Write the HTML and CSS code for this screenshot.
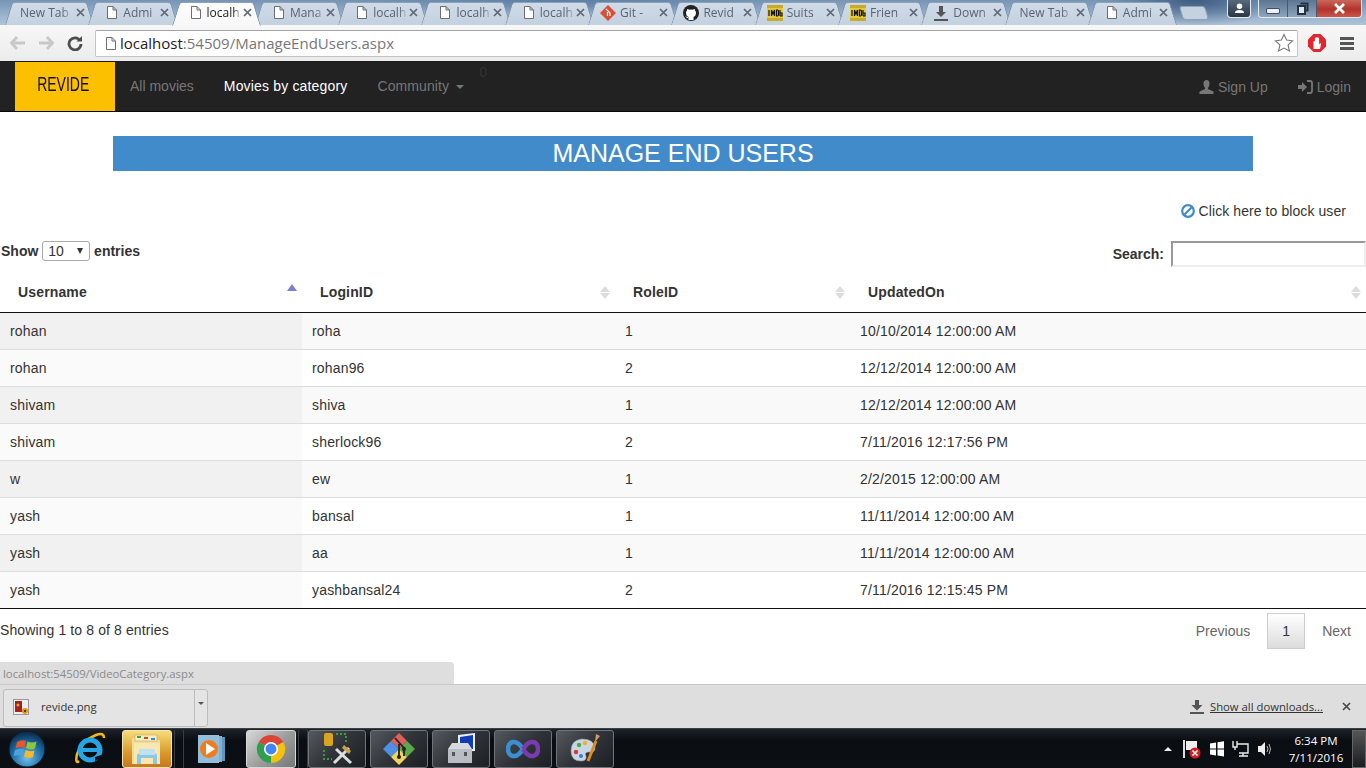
FILE: index.html
```html
<!DOCTYPE html>
<html lang="en">
<head>
  <meta charset="UTF-8">
  <title>Manage End Users</title>
  <link rel="stylesheet" href="styles.css">
</head>
<body>

  <!-- shared icons -->
  <svg class="defs" width="0" height="0">
    <defs>
      <symbol id="i-page" viewBox="0 0 10 13"><path d="M.5.5h5.500l3.500 3.500v8.500h-9z M6 .5v3.500h3.500" fill="#fff" stroke="#6b6f74"/></symbol>
      <symbol id="i-x" viewBox="0 0 9 9"><path d="M1 1l7 7M8 1l-7 7" stroke="#5f6873" stroke-width="1.700" fill="none"/></symbol>
      <symbol id="i-imdb" viewBox="0 0 16 16"><rect width="16" height="16" fill="#c9ab26"/><rect y="3" width="16" height="10" fill="#e6c93f"/><path d="M2 5v6M4.500 11V5l1.500 4 1.500-4v6M9.500 5v6h1q1 0 1-1.500v-3q0-1.500-1-1.500zM13 5v6M13 8h2v3h-2" stroke="#111" stroke-width="1.200" fill="none"/></symbol>
    </defs>
  </svg>

  <!-- browser tabs -->
  <div class="tabstrip">
    <div class="tab tab-plain"><span class="tab-title">New Tab</span><svg class="tab-close"><use href="#i-x"/></svg></div>
    <div class="tab"><svg class="tab-icon"><use href="#i-page"/></svg><span class="tab-title">Admi</span><svg class="tab-close"><use href="#i-x"/></svg></div>
    <div class="tab tab-active"><svg class="tab-icon"><use href="#i-page"/></svg><span class="tab-title">localh</span><svg class="tab-close"><use href="#i-x"/></svg></div>
    <div class="tab"><svg class="tab-icon"><use href="#i-page"/></svg><span class="tab-title">Mana</span><svg class="tab-close"><use href="#i-x"/></svg></div>
    <div class="tab"><svg class="tab-icon"><use href="#i-page"/></svg><span class="tab-title">localh</span><svg class="tab-close"><use href="#i-x"/></svg></div>
    <div class="tab"><svg class="tab-icon"><use href="#i-page"/></svg><span class="tab-title">localh</span><svg class="tab-close"><use href="#i-x"/></svg></div>
    <div class="tab"><svg class="tab-icon"><use href="#i-page"/></svg><span class="tab-title">localh</span><svg class="tab-close"><use href="#i-x"/></svg></div>
    <div class="tab tab-wide-icon"><svg class="tab-icon" viewBox="0 0 16 16"><path d="M8 0l8 8-8 8-8-8z" fill="#dd4c35"/><path d="M6 4l4 4v3M7.500 7v4" stroke="#fff" stroke-width="1.200" fill="none"/></svg><span class="tab-title">Git -</span><svg class="tab-close"><use href="#i-x"/></svg></div>
    <div class="tab tab-wide-icon"><svg class="tab-icon" viewBox="0 0 16 16"><circle cx="8" cy="8" r="8" fill="#222"/><path d="M5.500 15v-3Q3 11 3 7.500q0-1 1-2 0-1 .2-1.500 1 0 2 .8 1.800-.4 3.600 0 1-.8 2-.8.200.5.200 1.500 1 1 1 2 0 3.500-2.500 4.500v3z" fill="#fff"/><path d="M5 12.500q-1.500.5-2-1" stroke="#fff" fill="none"/></svg><span class="tab-title">Revid</span><svg class="tab-close"><use href="#i-x"/></svg></div>
    <div class="tab tab-wide-icon"><svg class="tab-icon"><use href="#i-imdb"/></svg><span class="tab-title">Suits</span><svg class="tab-close"><use href="#i-x"/></svg></div>
    <div class="tab tab-wide-icon"><svg class="tab-icon"><use href="#i-imdb"/></svg><span class="tab-title">Frien</span><svg class="tab-close"><use href="#i-x"/></svg></div>
    <div class="tab tab-wide-icon"><svg class="tab-icon" viewBox="0 0 16 16"><path d="M6 1h4v6h3l-5 5-5-5h3zM1 14h14v2H1z" fill="#555"/></svg><span class="tab-title">Down</span><svg class="tab-close"><use href="#i-x"/></svg></div>
    <div class="tab tab-plain"><span class="tab-title">New Tab</span><svg class="tab-close"><use href="#i-x"/></svg></div>
    <div class="tab"><svg class="tab-icon"><use href="#i-page"/></svg><span class="tab-title">Admi</span><svg class="tab-close"><use href="#i-x"/></svg></div>
    <div class="tab-new"></div>

    <div class="win-controls">
      <div class="win-user">
        <svg width="11" height="11" viewBox="0 0 12 12"><circle cx="6" cy="3.500" r="3" fill="#fff"/><path d="M1 11q0-3.500 5-3.500t5 3.500z" fill="#fff"/></svg>
      </div>
      <div class="win-group">
        <div class="win-btn"><span class="win-min"></span></div>
        <div class="win-btn">
          <svg width="13" height="13" viewBox="0 0 13 13"><path d="M4.500 1.500h7v7h-2" fill="none" stroke="#26323f" stroke-width="2"/><rect x="2" y="4" width="7" height="8" fill="#dfe7ef" stroke="#26323f" stroke-width="2"/></svg>
        </div>
        <div class="win-btn win-close"><svg width="15" height="11" viewBox="0 0 15 11"><path d="M3 1l9 9M12 1l-9 9" stroke="#fff" stroke-width="2.800"/></svg></div>
      </div>
    </div>
  </div>

  <!-- browser toolbar -->
  <div class="toolbar">
    <svg class="tool-arrow" viewBox="0 0 16 14"><path d="M7 1L1.500 7 7 13M2 7h13" fill="none" stroke="#c8c8c8" stroke-width="2.800"/></svg>
    <svg class="tool-arrow" viewBox="0 0 16 14"><path d="M9 1l5.500 6L9 13M14 7H1" fill="none" stroke="#c8c8c8" stroke-width="2.800"/></svg>
    <svg class="tool-reload" viewBox="0 0 16 16"><path d="M13 5.500A6 6 0 1 0 14 9" fill="none" stroke="#4d4d4d" stroke-width="2.800"/><path d="M9.500 6.500H15V1z" fill="#4d4d4d"/></svg>
    <div class="omnibox">
      <svg class="omni-page"><use href="#i-page"/></svg>
      <span class="omni-url"><b>localhost</b>:54509/ManageEndUsers.aspx</span>
      <svg class="omni-star" viewBox="0 0 20 20"><path d="M10 1.500l2.600 5.600 6 .7-4.500 4.100 1.300 6L10 15l-5.400 2.900 1.300-6L1.400 7.800l6-.7z" fill="#fff" stroke="#777" stroke-width="1.100"/></svg>
    </div>
    <svg class="tool-opera" viewBox="0 0 18 18"><path d="M5.500 0h7L18 5.500v7L12.500 18h-7L0 12.500v-7z" fill="#e3262e"/><path d="M5.500 15V8q0-1 .7-1t.7 1V4.500q0-.9.7-.9t.7.9V4q0-.9.700-.9t.7.9v.5q0-.9.700-.9t.7.9v6l.8-1q.9-.6 1.200.2L12 15z" fill="#fff"/></svg>
    <div class="tool-menu"><span></span><span></span><span></span></div>
  </div>

  <!-- page navbar -->
  <nav class="navbar">
    <a class="brand"><span class="brand-text">REVIDE</span></a>
    <a class="nav-link">All movies</a>
    <a class="nav-link nav-current">Movies by category</a>
    <a class="nav-link nav-community">Community <span class="caret"></span></a>
    <span class="nav-count">0</span>
    <div class="nav-right">
      <a class="nav-link nav-icon-link">
        <svg class="nav-icon" viewBox="0 0 14 14"><path d="M7 0q3 0 3 3.500T8.500 8v1L14 11.500V14H0v-2.500L5.500 9V8Q4 7 4 3.500T7 0z" fill="#777"/></svg>Sign Up
      </a>
      <a class="nav-link nav-icon-link">
        <svg class="nav-icon" viewBox="0 0 15 14"><path d="M0 5h4V2l5 5-5 5V9H0z" fill="#777"/><path d="M9 1h3q2 0 2 2v8q0 2-2 2H9" fill="none" stroke="#777" stroke-width="1.800"/></svg>Login
      </a>
    </div>
  </nav>

  <main class="content">
    <h1 class="banner">MANAGE END USERS</h1>

    <div class="block-row">
      <a class="block-link">
        <svg class="block-icon" viewBox="0 0 14 14"><circle cx="7" cy="7" r="5.800" fill="none" stroke="#428bca" stroke-width="2.200"/><path d="M3 11l8-8" stroke="#428bca" stroke-width="2.200"/></svg>
        Click here to block user
      </a>
    </div>

    <div class="dt-controls">
      <label class="dt-length">Show <span class="fake-select">10<i></i></span> entries</label>
      <label class="dt-search">Search: <input class="dt-input" type="text"></label>
    </div>

    <table class="users">
      <thead>
        <tr>
          <th class="col-user sorted">Username</th>
          <th class="col-login">LoginID</th>
          <th class="col-role">RoleID</th>
          <th class="col-date">UpdatedOn</th>
        </tr>
      </thead>
      <tbody>
        <tr><td>rohan</td><td>roha</td><td>1</td><td>10/10/2014 12:00:00 AM</td></tr>
        <tr><td>rohan</td><td>rohan96</td><td>2</td><td>12/12/2014 12:00:00 AM</td></tr>
        <tr><td>shivam</td><td>shiva</td><td>1</td><td>12/12/2014 12:00:00 AM</td></tr>
        <tr><td>shivam</td><td>sherlock96</td><td>2</td><td>7/11/2016 12:17:56 PM</td></tr>
        <tr><td>w</td><td>ew</td><td>1</td><td>2/2/2015 12:00:00 AM</td></tr>
        <tr><td>yash</td><td>bansal</td><td>1</td><td>11/11/2014 12:00:00 AM</td></tr>
        <tr><td>yash</td><td>aa</td><td>1</td><td>11/11/2014 12:00:00 AM</td></tr>
        <tr><td>yash</td><td>yashbansal24</td><td>2</td><td>7/11/2016 12:15:45 PM</td></tr>
      </tbody>
    </table>

    <div class="dt-footer">
      <div class="dt-info">Showing 1 to 8 of 8 entries</div>
      <div class="pager">
        <a class="page-link">Previous</a>
        <a class="page-num">1</a>
        <a class="page-link page-next">Next</a>
      </div>
    </div>

    <div class="status-bubble">localhost:54509/VideoCategory.aspx</div>
  </main>

  <!-- downloads shelf -->
  <div class="shelf">
    <div class="shelf-item">
      <div class="shelf-file">
        <svg class="shelf-thumb" viewBox="0 0 16 16"><rect x=".5" y=".5" width="15" height="15" fill="#eee" stroke="#999"/><rect x="2" y="2" width="7" height="11" fill="#a3231c"/><circle cx="5" cy="6" r="1.500" fill="#e9a13a"/><circle cx="12" cy="12" r="3" fill="#e0990f"/><circle cx="12" cy="12" r="1" fill="#222"/></svg>
        <span>revide.png</span>
      </div>
      <div class="shelf-drop"><i></i></div>
    </div>
    <div class="shelf-right">
      <svg class="shelf-dl" viewBox="0 0 14 14"><path d="M5 0h4v5h3.500L7 10.500 1.500 5H5zM0 12h14v2H0z" fill="#555"/></svg>
      <a class="shelf-all">Show all downloads...</a>
      <svg class="shelf-x" viewBox="0 0 9 9"><path d="M1 1l7 7M8 1l-7 7" stroke="#444" stroke-width="1.600"/></svg>
    </div>
  </div>

  <!-- windows taskbar -->
  <footer class="taskbar">
    <div class="orb-slot">
      <svg width="38" height="38" viewBox="0 0 38 38">
        <defs>
          <radialGradient id="orb" cx="50%" cy="75%" r="70%"><stop offset="0" stop-color="#6fc0e8"/><stop offset=".6" stop-color="#1c6aa5"/><stop offset="1" stop-color="#0d2d4a"/></radialGradient>
        </defs>
        <circle cx="19" cy="19" r="18" fill="url(#orb)" stroke="#0a1a2a"/>
        <path d="M9 12q5-3 9-1l-1.500 7q-4-2-9 .5z" fill="#e8562a"/>
        <path d="M19.500 11.500q4 2 9 0L27 18.500q-4 2-9-.5z" fill="#8cc63f"/>
        <path d="M7 20q5-2 9-.5L15 26q-4-2-9.500.5z" fill="#4aa3df"/>
        <path d="M17.500 20q4 2 9 .5L25 27q-4 2-9-.5z" fill="#f5b92e"/>
      </svg>
    </div>
    <div class="pin-slot pin-ie">
      <svg width="32" height="34" viewBox="0 0 32 34">
        <path d="M5 29Q1 33 3 22 7 9 22 3q8-3 8 3" fill="none" stroke="#f0b81e" stroke-width="2.500"/>
        <circle cx="16" cy="18" r="10" fill="none" stroke="#25a5e4" stroke-width="5"/>
        <path d="M8 18h17" stroke="#25a5e4" stroke-width="4"/>
        <path d="M21 25l6-2v3l-6 3z" fill="#0d1116"/>
      </svg>
    </div>
    <div class="task-btn task-hot">
      <svg width="32" height="32" viewBox="0 0 32 32">
        <path d="M1 5h12l2 2h14v24H1z" fill="#f1dc9a"/>
        <rect x="4" y="2" width="22" height="6" fill="#fbeec0" stroke="#c4a964" stroke-width=".6"/>
        <rect x="6" y="3" width="4" height="2" fill="#2ea84a"/><rect x="13" y="4" width="4" height="2" fill="#d9482b"/><rect x="20" y="5" width="4" height="2" fill="#3a8bd8"/>
        <path d="M3 10h26v21H3z" fill="#f7e7b0"/>
        <path d="M6 31v-8q0-3 3-3h14q3 0 3 3v8h-4v-6H10v6z" fill="#8fc6e6"/>
        <rect x="8" y="16" width="16" height="6" rx="1" fill="#bfe1f2"/>
      </svg>
    </div>
    <div class="task-sep"></div>
    <div class="pin-slot pin-wmp">
      <svg width="28" height="30" viewBox="0 0 28 30">
        <rect x="6" y="3" width="21" height="24" fill="#5f95bd"/><rect x="3" y="2" width="21" height="26" fill="#7fb1d4"/><rect x="0" y="1" width="21" height="28" fill="#93bedb"/>
        <circle cx="11" cy="15" r="9" fill="#f07d1d"/><path d="M8 9l9 6-9 6z" fill="#fff"/>
      </svg>
    </div>
    <div class="task-btn task-open">
      <svg width="30" height="30" viewBox="0 0 32 32">
        <path d="M16 16L3 8.500A15 15 0 0 1 29 8.500z" fill="#db4437"/>
        <path d="M16 16L29 8.500A15 15 0 0 1 16 31z" fill="#f4c20d"/>
        <path d="M16 16V31A15 15 0 0 1 3 8.500z" fill="#2e9e4f"/>
        <circle cx="16" cy="16" r="7.500" fill="#fff"/><circle cx="16" cy="16" r="5.800" fill="#4285f4"/>
      </svg>
    </div>
    <div class="task-sep task-sep-last"></div>
    <div class="task-btn task-app">
      <svg width="34" height="34" viewBox="0 0 34 34">
        <rect x="4" y="1" width="9" height="13" rx="2" fill="#d9a520"/>
        <path d="M16 2h10v10M4 18v9h8" fill="none" stroke="#3aa13a" stroke-width="1.800" stroke-dasharray="2 2"/>
        <path d="M14 31L29 16M16 17l15 14" stroke="#ddd" stroke-width="3"/>
        <path d="M24 13l7 6-2 3-7-6z" fill="#c9a24a"/>
      </svg>
    </div>
    <div class="task-btn task-app">
      <svg width="34" height="34" viewBox="0 0 34 34">
        <path d="M17 1l8 8-8 8-8-8z" fill="#e0605c"/><path d="M1 17l8-8 8 8-8 8z" fill="#4f8fe6"/><path d="M33 17l-8-8-8 8 8 8z" fill="#5ca84b"/><path d="M17 33l-8-8 8-8 8 8z" fill="#eed35f"/>
        <path d="M13 6l9 10v8M17 12v12" stroke="#222" stroke-width="1.800" fill="none"/><circle cx="22" cy="17" r="2" fill="#222"/><circle cx="17" cy="25" r="2" fill="#222"/>
      </svg>
    </div>
    <div class="task-btn task-app">
      <svg width="34" height="34" viewBox="0 0 34 34">
        <path d="M14 3l17-2v18l-17 1z" fill="#e8eef7"/><path d="M16 5l13-2v14l-13 1z" fill="#123bb5"/>
        <rect x="4" y="17" width="24" height="14" fill="#b9bec4"/><path d="M4 17l4-6h16l4 6z" fill="#d6dade"/>
        <rect x="8" y="20" width="3" height="4" fill="#555"/><rect x="20" y="20" width="3" height="4" fill="#555"/>
      </svg>
    </div>
    <div class="task-btn task-app">
      <svg width="34" height="22" viewBox="0 0 34 22">
        <path d="M17 11q-5-8-10-7T2 11t5 7 10-7" fill="none" stroke="#3b8fd0" stroke-width="4.500"/>
        <path d="M17 11q5-8 10-7t5 7-5 7-10-7" fill="none" stroke="#7a3bb0" stroke-width="4.500"/>
      </svg>
    </div>
    <div class="task-btn task-app">
      <svg width="34" height="34" viewBox="0 0 34 34">
        <path d="M3 19Q3 8 14 7q12 0 13 9 0 5-6 4-5 0-3 4 1 5-5 5-10 0-10-10z" fill="#c9d6e4" stroke="#8fa0b0" stroke-width=".6"/>
        <circle cx="8" cy="20" r="2.200" fill="#d9382b"/><circle cx="11" cy="13" r="2.200" fill="#53a83c"/><circle cx="17" cy="11" r="2.200" fill="#e9b52a"/><circle cx="13" cy="24" r="2" fill="#3a7bd8"/>
        <path d="M20 29L28 9" stroke="#e08a22" stroke-width="3"/><path d="M27 10l1-8 4 2z" fill="#c9a06a"/>
      </svg>
    </div>

    <div class="tray">
      <span class="tray-up"></span>
      <svg class="tray-icon" width="20" height="20" viewBox="0 0 20 20"><path d="M2 1v18" stroke="#ddd" stroke-width="2"/><path d="M4 2h11v9H4z" fill="#eee"/><circle cx="13" cy="14" r="5.500" fill="#d41f26"/><path d="M10.500 11.500l5 5M15.500 11.500l-5 5" stroke="#fff" stroke-width="1.600"/></svg>
      <svg class="tray-icon" width="16" height="16" viewBox="0 0 16 16"><path d="M1 2.500l6-1v6H1zM8.500 1.300l6.500-1v7.200H8.500zM1 8.500h6v6l-6-1zM8.500 8.500H15v7l-6.500-1z" fill="#fff"/></svg>
      <svg class="tray-icon" width="18" height="18" viewBox="0 0 18 18"><path d="M1 1v6h4V1M3 7v3" fill="none" stroke="#eee" stroke-width="1.400"/><path d="M5 4h11v9H7" fill="none" stroke="#eee" stroke-width="1.400"/><path d="M11 13v3M7 16h9" stroke="#eee" stroke-width="1.400"/></svg>
      <svg class="tray-icon" width="16" height="16" viewBox="0 0 16 16"><path d="M1 5h3l4-4v14l-4-4H1z" fill="#eee"/><path d="M10 5q2 3 0 6M12 3q3 5 0 10" fill="none" stroke="#bbb"/></svg>
      <div class="clock"><div>6:34 PM</div><div>7/11/2016</div></div>
      <div class="show-desktop"></div>
    </div>
  </footer>

</body>
</html>
```

FILE: styles.css
```css
* {
  margin: 0;
  padding: 0;
  box-sizing: border-box;
}

html, body {
  width: 1366px;
  height: 768px;
  overflow: hidden;
}

body {
  display: flex;
  flex-direction: column;
  font-family: "Liberation Sans", Arial, sans-serif;
  font-size: 14px;
  line-height: 20px;
  color: #333;
  background: #fff;
}

.defs {
  position: absolute;
}

/* tabs */
.tabstrip {
  position: relative;
  z-index: 1;
  height: 25px;
  display: flex;
  padding-left: 8px;
  padding-top: 2px;
  background:
    radial-gradient(90px 26px at 1195px 0, #3d5c82, transparent),
    radial-gradient(220px 14px at 560px 0, #5d7ea4, transparent),
    linear-gradient(#7694b5, #9fb7cf 70%, #aec3d8);
  flex-shrink: 0;
}

.tab {
  position: relative;
  width: 83.3px;
  height: 23px;
  display: flex;
  align-items: center;
  padding: 0 5px 2px 16px;
  font-family: "Open Sans", sans-serif;
  font-size: 12px;
  color: #5a646f;
}

/* the two halves lean in to make the slanted tab sides */
.tab::before,
.tab::after {
  content: "";
  position: absolute;
  top: 0;
  bottom: 0;
  background: linear-gradient(#cfdbe7, #c3d1e0);
  border-top: 1px solid #8ea2b6;
}

.tab::before {
  left: -3px;
  right: 45%;
  border-left: 1px solid #7f95ab;
  border-top-left-radius: 3px;
  transform: skewX(-17deg);
  transform-origin: bottom;
}

.tab::after {
  left: 45%;
  right: -3px;
  border-right: 1px solid #7f95ab;
  border-top-right-radius: 3px;
  transform: skewX(17deg);
  transform-origin: bottom;
}

.tab > * {
  position: relative;
  z-index: 1;
}

.tab-plain {
  padding-left: 12px;
}

.tab-active {
  z-index: 2;
  height: 24px;
  padding-bottom: 3px;
  color: #222;
}

.tab-active::before,
.tab-active::after {
  background: linear-gradient(#fdfdfd, #f7f7f7);
}

.tab-icon {
  width: 10px;
  height: 13px;
  margin-right: 6px;
  flex-shrink: 0;
}

.tab-wide-icon {
  padding-left: 9px;
}

.tab-wide-icon .tab-icon {
  width: 16px;
  height: 16px;
  margin-right: 4px;
}

.tab-title {
  flex: 1;
  overflow: hidden;
  white-space: nowrap;
  -webkit-mask-image: linear-gradient(90deg, #000 75%, transparent);
  mask-image: linear-gradient(90deg, #000 75%, transparent);
}

.tab-close {
  width: 9px;
  height: 9px;
  margin-left: 1px;
  margin-right: 1px;
  flex-shrink: 0;
}

.tab-new {
  width: 26px;
  height: 14px;
  margin: 4px 0 0 7px;
  background: #c3d1e0;
  border: 1px solid #8ea2b6;
  border-radius: 3px;
  transform: skewX(17deg);
}

.win-controls {
  margin-left: auto;
  margin-right: 4px;
  margin-top: -2px;
  display: flex;
  gap: 7px;
}

.win-user {
  width: 24px;
  height: 18px;
  display: flex;
  align-items: center;
  justify-content: center;
  background: linear-gradient(#56697e, #2b3642);
  border: 1px solid #e4eaf0;
  border-top: none;
  border-radius: 0 0 4px 4px;
}

.win-group {
  display: flex;
  height: 18px;
  border: 1px solid #e4eaf0;
  border-top: none;
  border-radius: 0 0 4px 4px;
  overflow: hidden;
}

.win-btn {
  width: 29px;
  display: flex;
  align-items: center;
  justify-content: center;
  background: linear-gradient(#5c7591, #8ea5bc);
  border-right: 1px solid #465a70;
}

.win-close {
  width: 44px;
  border-right: none;
  background: linear-gradient(#c9665b, #b3332a 55%, #c9574c);
}

.win-min {
  width: 12px;
  height: 4px;
  margin-top: 5px;
  background: #eef2f6;
  border-radius: 1px;
  box-shadow: 0 0 0 1px #3f4f60;
}

/* toolbar */
.toolbar {
  height: 36px;
  display: flex;
  align-items: center;
  padding-left: 10px;
  background: linear-gradient(#f7f7f7, #ececec);
  flex-shrink: 0;
}

.tool-arrow {
  width: 16px;
  height: 14px;
  margin-right: 12px;
}

.tool-reload {
  width: 16px;
  height: 16px;
  margin-left: 1px;
  margin-right: 12px;
}

.omnibox {
  width: 1203px;
  height: 27px;
  display: flex;
  align-items: center;
  padding-left: 10px;
  background: #fff;
  border: 1px solid #c4c4c4;
  border-top-color: #a4a4a4;
  border-radius: 2px;
}

.omni-page {
  width: 10px;
  height: 13px;
  margin-right: 4px;
}

.omni-url {
  flex: 1;
  font-family: "Open Sans", sans-serif;
  font-size: 15px;
  color: #777;
}

.omni-url b {
  font-weight: 400;
  color: #222;
}

.omni-star {
  width: 20px;
  height: 20px;
  margin-right: 3px;
}

.tool-opera {
  width: 18px;
  height: 18px;
  margin-left: 10px;
}

.tool-menu {
  width: 14px;
  margin-left: 14px;
  display: flex;
  flex-direction: column;
  gap: 2px;
}

.tool-menu span {
  height: 3px;
  background: #555;
}

/* navbar */
.navbar {
  height: 51px;
  display: flex;
  align-items: stretch;
  background: #222;
  border-top: 1px solid #1a1a1a;
  border-bottom: 1px solid #080808;
  flex-shrink: 0;
}

.brand {
  width: 100px;
  margin-left: 15px;
  display: flex;
  align-items: center;
  justify-content: center;
  padding: 0 4px 6px 0;
  background: #fcc000;
  color: #111;
  font-size: 20px;
}

.brand-text {
  transform: scaleX(.7);
}

.nav-link {
  padding: 14px 15px;
  color: #777;
  white-space: nowrap;
}

.nav-current {
  color: #fff;
  letter-spacing: .17px;
}

.nav-community {
  letter-spacing: .1px;
}

.caret {
  display: inline-block;
  margin-left: 3px;
  vertical-align: middle;
  border-top: 4px solid #777;
  border-left: 4px solid transparent;
  border-right: 4px solid transparent;
}

.nav-count {
  align-self: flex-start;
  margin: 0;
  color: #333;
}

.nav-right {
  margin-left: auto;
  display: flex;
}

.nav-icon-link {
  display: flex;
  align-items: center;
}

.nav-icon {
  width: 15px;
  height: 14px;
  margin-right: 4px;
}

/* page */
.content {
  position: relative;
  flex: 1;
  min-height: 0;
  overflow: hidden;
}

.banner {
  width: 1140px;
  height: 35px;
  margin: 24px auto 0;
  background: #428bca;
  color: #fff;
  font-size: 25px;
  font-weight: 400;
  line-height: 35px;
  text-align: center;
}

.block-row {
  margin-top: 30px;
  padding-right: 20px;
  text-align: right;
  letter-spacing: .08px;
}

.block-link {
  display: inline-flex;
  align-items: center;
  gap: 4px;
}

.block-icon {
  width: 14px;
  height: 14px;
}

.dt-controls {
  margin-top: 18px;
  height: 26px;
  display: flex;
  justify-content: space-between;
  font-weight: 700;
}

.dt-length {
  padding-left: 1px;
  line-height: 20px;
}

.fake-select {
  position: relative;
  display: inline-block;
  width: 48px;
  height: 20px;
  padding-left: 5px;
  font-weight: 400;
  line-height: 18px;
  border: 1px solid #a9a9a9;
  border-radius: 3px;
  background: #fff;
  vertical-align: top;
}

.fake-select i {
  position: absolute;
  right: 6px;
  top: 6px;
  border-top: 6px solid #333;
  border-left: 3px solid transparent;
  border-right: 3px solid transparent;
}

.dt-search {
  display: flex;
  align-items: flex-end;
  line-height: 26px;
}

.dt-input {
  width: 195px;
  height: 26px;
  margin-left: 7px;
  background: #fff;
  border-style: solid;
  border-width: 2px;
  border-color: #999 #eee #eee #999;
}

.users {
  width: 1366px;
  margin-top: 5px;
  table-layout: fixed;
  border-collapse: separate;
  border-spacing: 0;
}

.users th {
  position: relative;
  height: 41px;
  padding: 10px 18px;
  text-align: left;
  letter-spacing: .15px;
  border-bottom: 1px solid #111;
}

.users th::before,
.users th::after {
  content: "";
  position: absolute;
  right: 5px;
  border-left: 5px solid transparent;
  border-right: 5px solid transparent;
}

.users th::before {
  top: 14px;
  border-bottom: 6px solid #dcdcdc;
}

.users th::after {
  top: 21px;
  border-top: 6px solid #dcdcdc;
}

.users th.sorted::before {
  top: 12px;
  border-bottom: 7px solid #7a80cf;
}

.users th.sorted::after {
  display: none;
}

.col-user { width: 302px; }
.col-login { width: 313px; }
.col-role { width: 235px; }
.col-date { width: 516px; }

.users td {
  height: 37px;
  padding: 8px 10px;
  letter-spacing: .17px;
  border-bottom: 1px solid #ddd;
}

.users tbody tr:nth-child(odd) td {
  background: #f9f9f9;
}

.users tbody tr:nth-child(odd) td:first-child {
  background: #f1f1f1;
}

.users tbody tr:nth-child(even) td:first-child {
  background: #fafafa;
}

.users tbody tr:last-child td {
  border-bottom-color: #111;
}

.dt-footer {
  display: flex;
  justify-content: space-between;
  padding-top: 4px;
  padding-right: 15px;
}

.dt-info {
  padding-top: 7px;
  letter-spacing: .11px;
}

.pager {
  display: flex;
  align-items: center;
  color: #666;
}

.page-num {
  width: 38px;
  height: 36px;
  margin: 0 17px;
  display: flex;
  align-items: center;
  justify-content: center;
  color: #333;
  background: linear-gradient(#fff, #dcdcdc);
  border: 1px solid #cfcfcf;
}

.status-bubble {
  position: absolute;
  left: 0;
  bottom: 0;
  width: 454px;
  height: 22px;
  padding-left: 3px;
  font-family: "Open Sans", sans-serif;
  font-size: 11.3px;
  line-height: 24px;
  color: #8a8a8a;
  background: #dedede;
  border-top-right-radius: 4px;
}

/* downloads shelf */
.shelf {
  height: 44px;
  display: flex;
  align-items: center;
  padding-left: 3px;
  padding-top: 2px;
  background: #dedede;
  border-top: 1px solid #c9c9c9;
  font-family: "Open Sans", sans-serif;
  font-size: 11.3px;
  flex-shrink: 0;
}

.shelf-item {
  width: 205px;
  height: 38px;
  display: flex;
  background: #e4e4e4;
  border: 1px solid #bdbdbd;
  border-radius: 3px;
}

.shelf-file {
  flex: 1;
  display: flex;
  align-items: center;
  padding: 0 0 2px 9px;
  gap: 12px;
  color: #333;
}

.shelf-thumb {
  width: 16px;
  height: 16px;
}

.shelf-drop {
  width: 13px;
  border-left: 1px solid #bdbdbd;
  display: flex;
  justify-content: center;
  padding-top: 12px;
}

.shelf-drop i {
  height: 0;
  border-top: 3px solid #555;
  border-left: 3px solid transparent;
  border-right: 3px solid transparent;
}

.shelf-right {
  margin-left: auto;
  padding-bottom: 2px;
  display: flex;
  align-items: center;
}

.shelf-dl {
  width: 14px;
  height: 14px;
  margin-right: 6px;
}

.shelf-all {
  color: #333;
  text-decoration: underline;
}

.shelf-x {
  width: 9px;
  height: 9px;
  margin: 0 15px 0 19px;
}

/* taskbar */
.taskbar {
  height: 40px;
  display: flex;
  align-items: center;
  background: linear-gradient(#1d232b, #0a0d11 30%, #0c1015);
  border-top: 1px solid #3b4047;
  flex-shrink: 0;
}

.orb-slot {
  width: 58px;
  padding-left: 8px;
  display: flex;
}

.pin-slot {
  display: flex;
  justify-content: center;
}

.pin-ie {
  width: 64px;
}

.task-btn {
  height: 38px;
  display: flex;
  align-items: center;
  justify-content: center;
  border-radius: 3px;
}

.task-hot {
  width: 50px;
  background: linear-gradient(#f6dc78, #d99a2c 60%, #c8761c);
  border: 1px solid #f4e6b4;
}

.task-open {
  width: 50px;
  background: linear-gradient(135deg, #d8d8d8, #9a9a9a 55%, #777);
  border: 1px solid #d8d8d8;
}

.task-app {
  width: 58px;
  margin-right: 4px;
  background: linear-gradient(135deg, #55595e, #303438 50%, #1c1f23);
  border: 1px solid #70757b;
}

.task-sep {
  width: 10px;
  height: 38px;
  margin: 0 1px 0 2px;
  border-left: 1px solid #3a3e44;
  border-right: 1px solid #3a3e44;
}

.task-sep-last {
  margin-right: 0;
}

.pin-wmp {
  width: 56px;
  margin-left: -1px;
  margin-right: 6px;
}

.tray {
  margin-left: auto;
  height: 39px;
  display: flex;
  align-items: center;
  color: #fff;
}

.tray-up {
  width: 0;
  margin-right: 10px;
  border-bottom: 4px solid #eee;
  border-left: 4px solid transparent;
  border-right: 4px solid transparent;
}

.tray-icon {
  margin-right: 7px;
  flex-shrink: 0;
}

.clock {
  width: 70px;
  margin-left: 1px;
  padding-top: 1px;
  font-family: "Open Sans", sans-serif;
  font-size: 11.5px;
  line-height: 17px;
  text-align: center;
}

.show-desktop {
  width: 14px;
  height: 38px;
  margin-left: 1px;
  background: linear-gradient(#555, #1a1d21);
  border: 1px solid #666;
}
```
